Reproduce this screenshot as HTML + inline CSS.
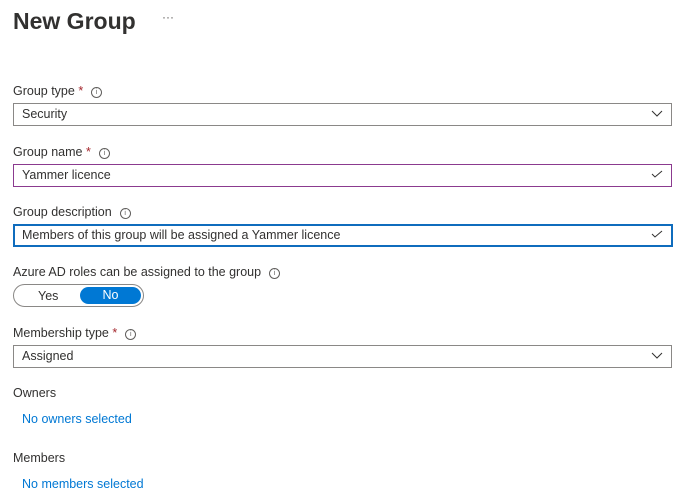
<!DOCTYPE html>
<html><head><style>
body{margin:0;background:#fff;font-family:"Liberation Sans",sans-serif;color:#323130;width:690px;height:504px;position:relative;overflow:hidden}
.a{position:absolute}
.t{font-size:23px;font-weight:bold;left:13px;top:8px;color:#323130}
.l{font-size:12.5px;left:13px}
.req{color:#a4262c}
.i{display:inline-block;width:9px;height:9px;border:1px solid #605e5c;border-radius:50%;font-size:7px;line-height:9px;text-align:center;vertical-align:1px;margin-left:8px;color:#605e5c}
.box{left:13px;width:657px;height:21px;border:1px solid #8a8886;font-size:12.5px;line-height:21px;padding-left:8px;box-sizing:content-box;width:649px}
.chev{position:absolute;right:8px;top:5px}
.link{color:#0078d4;font-size:12.5px;left:22px}
</style></head><body>
<div class="a t">New Group</div>
<div class="a" style="left:162px;top:10px;font-size:12px;color:#605e5c">···</div>
<div class="a l" style="top:84px">Group type <span class="req">*</span><span class="i">i</span></div>
<div class="a box" style="top:103px">Security<svg class="chev" width="12" height="9"><path d="M1 2l5 5 5-5" stroke="#323130" fill="none"/></svg></div>
<div class="a l" style="top:145px">Group name <span class="req">*</span><span class="i">i</span></div>
<div class="a box" style="top:164px;border-color:#8b3a8f">Yammer licence<svg class="chev" width="12" height="9"><path d="M1 4l3 3 7-6" stroke="#323130" fill="none"/></svg></div>
<div class="a l" style="top:205px">Group description<span class="i">i</span></div>
<div class="a box" style="top:224px;border:2px solid #0f6cbd;height:19px;line-height:19px;padding-left:7px">Members of this group will be assigned a Yammer licence<svg class="chev" width="12" height="9" style="top:4px"><path d="M1 4l3 3 7-6" stroke="#323130" fill="none"/></svg></div>
<div class="a l" style="top:265px">Azure AD roles can be assigned to the group<span class="i">i</span></div>
<div class="a" style="left:13px;top:284px;width:129px;height:21px;border:1px solid #8a8886;border-radius:12px"></div>
<div class="a" style="left:38px;top:289px;font-size:12.5px">Yes</div>
<div class="a" style="left:80px;top:287px;width:61px;height:17px;background:#0078d4;border-radius:9px;color:#fff;font-size:12.5px;text-align:center;line-height:17px">No</div>
<div class="a l" style="top:326px">Membership type <span class="req">*</span><span class="i">i</span></div>
<div class="a box" style="top:345px">Assigned<svg class="chev" width="12" height="9"><path d="M1 2l5 5 5-5" stroke="#323130" fill="none"/></svg></div>
<div class="a l" style="top:386px">Owners</div>
<div class="a link" style="top:412px">No owners selected</div>
<div class="a l" style="top:451px">Members</div>
<div class="a link" style="top:477px">No members selected</div>
</body></html>
